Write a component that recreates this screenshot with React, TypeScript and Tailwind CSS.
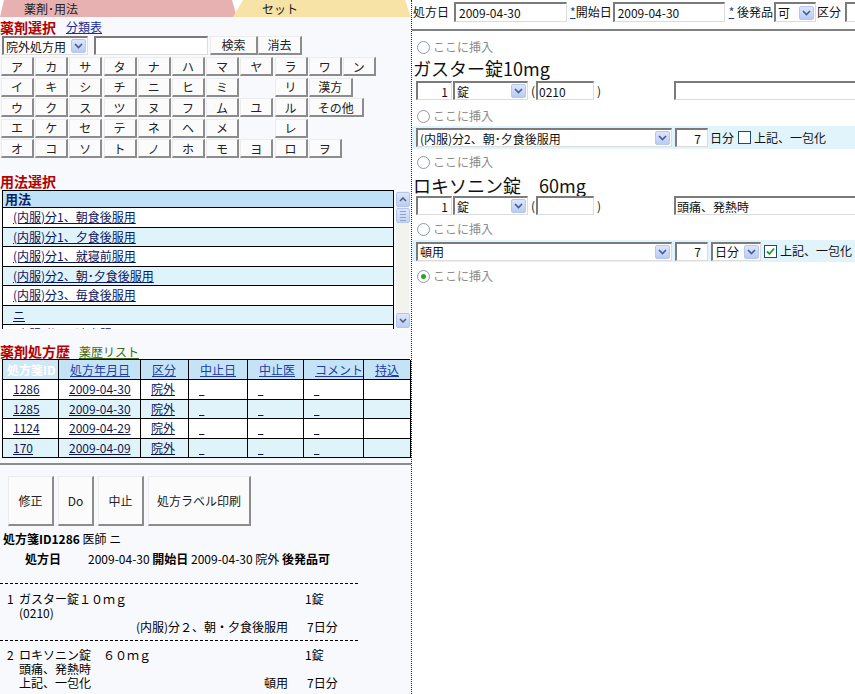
import React from "react";

const XP =
  "flex shrink-0 items-center justify-center bg-[#fbfbfb] border-t border-l border-t-[#ececec] border-l-[#ececec] border-r-2 border-b-2 border-r-[#8c8c8c] border-b-[#8c8c8c] text-[#222]";
const INSET =
  "border-t-2 border-l-2 border-t-[#7b7b7b] border-l-[#7b7b7b] border-r border-b border-r-[#dcdcdc] border-b-[#dcdcdc] bg-white";

function DropArrow() {
  return (
    <span className="flex h-[14px] w-[15px] shrink-0 items-center justify-center rounded-[2px] border border-[#b5c7ee] bg-linear-to-b from-[#dce6fd] to-[#b9cbf4]">
      <svg width="9" height="6" viewBox="0 0 9 6">
        <path d="M1 1 L4.5 4.5 L8 1" fill="none" stroke="#4a5f8c" strokeWidth="1.7" />
      </svg>
    </span>
  );
}

function Sel({ className, children }: { className: string; children?: React.ReactNode }) {
  return (
    <div className={`flex h-[19px] shrink-0 items-center justify-between pl-[2px] pr-[1px] ${INSET} ${className}`}>
      <span className="truncate text-[12px] leading-[15px] text-[#111]">{children}</span>
      <DropArrow />
    </div>
  );
}

function Box({ className, children }: { className: string; children?: React.ReactNode }) {
  return (
    <div className={`flex h-[19px] shrink-0 items-center text-[12px] leading-[15px] text-[#111] ${INSET} ${className}`}>
      {children}
    </div>
  );
}

function Radio({ checked }: { checked?: boolean }) {
  return (
    <span className="flex h-[13px] w-[13px] shrink-0 items-center justify-center rounded-full border border-[#8e9aa8] bg-white">
      {checked && <span className="h-[5px] w-[5px] rounded-full bg-[#2aa52a]" />}
    </span>
  );
}

function Insert({ checked }: { checked?: boolean }) {
  return (
    <div className="flex h-[18px] items-center pl-[5px]">
      <Radio checked={checked} />
      <span className="ml-[3px] text-[12px] leading-[14px] text-[#8a8a8a]">ここに挿入</span>
    </div>
  );
}

function Check({ checked }: { checked?: boolean }) {
  return (
    <span className="flex h-[13px] w-[13px] shrink-0 items-center justify-center border border-[#1c4a7a] bg-white">
      {checked && (
        <svg width="9" height="9" viewBox="0 0 9 9">
          <path d="M1 4.5 L3.5 7 L8 1.5" fill="none" stroke="#21a121" strokeWidth="1.8" />
        </svg>
      )}
    </span>
  );
}

function ScrollBtn({ up }: { up?: boolean }) {
  return (
    <div className="mx-auto flex h-[15px] w-[14px] items-center justify-center rounded-[2px] border border-[#b4c6ee] bg-linear-to-b from-[#dde7fd] to-[#bccdf5]">
      <svg width="8" height="5" viewBox="0 0 8 5">
        <path d={up ? "M1 4 L4 1 L7 4" : "M1 1 L4 4 L7 1"} fill="none" stroke="#4d6185" strokeWidth="1.6" />
      </svg>
    </div>
  );
}

const KANA: string[][] = [
  ["ア", "カ", "サ", "タ", "ナ", "ハ", "マ", "ヤ", "ラ", "ワ", "ン"],
  ["イ", "キ", "シ", "チ", "ニ", "ヒ", "ミ", "", "リ", "漢方"],
  ["ウ", "ク", "ス", "ツ", "ヌ", "フ", "ム", "ユ", "ル", "その他"],
  ["エ", "ケ", "セ", "テ", "ネ", "ヘ", "メ", "", "レ"],
  ["オ", "コ", "ソ", "ト", "ノ", "ホ", "モ", "ヨ", "ロ", "ヲ"],
];

const USAGE = [
  "(内服)分1、朝食後服用",
  "(内服)分1、夕食後服用",
  "(内服)分1、就寝前服用",
  "(内服)分2、朝･夕食後服用",
  "(内服)分3、毎食後服用",
  "ニ",
  "(内服)分1、適宜服用",
];

const HIST = [
  ["1286", "2009-04-30"],
  ["1285", "2009-04-30"],
  ["1124", "2009-04-29"],
  ["170", "2009-04-09"],
];

const HEAD = ["処方年月日", "区分", "中止日", "中止医", "コメント", "持込"];

function LeftPane() {
  return (
    <div className="flex h-full w-[411px] shrink-0 flex-col bg-[#f7f9fc] text-[12px] text-[#111]">
      {/* tabs */}
      <div className="flex h-[17px] shrink-0 bg-white">
        <div className="h-full w-[237px] shrink-0 bg-[#e7b0b1] pl-[24px] text-[12px] leading-[17px] text-[#222] [clip-path:polygon(0_100%,4px_0,232px_0,100%_100%)]">
          薬剤･用法
        </div>
        <div className="-ml-[4px] h-full flex-1 bg-[#f8e3a6] pl-[29px] text-[12px] leading-[17px] text-[#222] [clip-path:polygon(0_100%,10px_0,calc(100%_-_6px)_0,100%_100%)]">
          セット
        </div>
      </div>

      {/* heading */}
      <div className="flex h-[19px] shrink-0 items-end pb-[1px]">
        <span className="text-[14px] font-bold leading-[16px] text-[#b40000]">薬剤選択</span>
        <span className="ml-[10px] text-[12px] leading-[16px] text-[#1a2f9a] underline">分類表</span>
      </div>

      {/* search row */}
      <div className="flex h-[19px] shrink-0 items-center pl-[2px]">
        <Sel className="w-[86px]">院外処方用</Sel>
        <Box className="ml-[6px] w-[114px]" />
        <div className={`${XP} ml-[2px] h-[19px] w-[48px] text-[12px]`}>検索</div>
        <div className={`${XP} h-[19px] w-[44px] text-[12px]`}>消去</div>
      </div>

      {/* kana grid */}
      <div className="mt-[2px] flex shrink-0 flex-col gap-[1.5px] pl-[1px]">
        {KANA.map((row, i) => (
          <div key={i} className="flex gap-[1.2px]">
            {row.map((k, j) =>
              k === "" ? (
                <div key={j} className="h-[19px] w-[33px] shrink-0" />
              ) : (
                <div
                  key={j}
                  className={`${XP} h-[19px] text-[12px] leading-[15px] ${
                    k === "漢方" ? "w-[44px]" : k === "その他" ? "w-[55px]" : "w-[33px]"
                  }`}
                >
                  {k}
                </div>
              )
            )}
          </div>
        ))}
      </div>

      {/* usage */}
      <div className="mt-[15px] h-[16px] shrink-0 text-[14px] font-bold leading-[16px] text-[#b40000]">用法選択</div>
      <div className="mt-[1px] flex h-[139px] shrink-0 pl-[2px]">
        <div className="h-full w-[392px] overflow-hidden border-l border-r border-t border-black">
          <div className="h-[17px] border-b border-black bg-[#bfe2f7] pl-[2px] text-[13px] font-bold leading-[16px] text-[#0d1f6a]">
            用法
          </div>
          {USAGE.map((u, i) => (
            <div
              key={i}
              className={`h-[19.5px] border-b border-black pl-[10px] text-[12px] leading-[18px] text-[#0b1660] ${
                i % 2 === 1 ? "bg-[#dff3fb]" : "bg-white"
              }`}
            >
              <span className="underline">{u}</span>
            </div>
          ))}
        </div>
        <div className="ml-[1px] flex h-full w-[15px] flex-col border border-[#fbfbf8] bg-[#f3f3ee] pt-[1px]">
          <ScrollBtn up />
          <div className="mx-auto mt-[1px] flex h-[15px] w-[14px] flex-col items-center justify-center gap-[2px] rounded-[2px] border border-[#b4c6ee] bg-linear-to-b from-[#dde7fd] to-[#c4d3f6]">
            <span className="h-px w-[6px] bg-[#8ea2cc]" />
            <span className="h-px w-[6px] bg-[#8ea2cc]" />
            <span className="h-px w-[6px] bg-[#8ea2cc]" />
            <span className="h-px w-[6px] bg-[#8ea2cc]" />
          </div>
          <div className="flex-1" />
          <ScrollBtn />
        </div>
      </div>

      {/* history */}
      <div className="mt-[14px] flex h-[16px] shrink-0 items-end">
        <span className="text-[14px] font-bold leading-[16px] text-[#b40000]">薬剤処方歴</span>
        <span className="ml-[9px] text-[12px] leading-[15px] text-[#426a14] underline">薬歴リスト</span>
      </div>
      <div className="ml-[2px] grid w-[408px] shrink-0 grid-cols-[56px_82px_48px_59px_56px_60px_47px] border-l border-t border-black text-[12px]">
        <div className="flex h-[20px] items-center border-b border-r border-black bg-[#cfe8f8] pl-[4px] font-bold text-white">
          処方箋ID
        </div>
        {HEAD.map((h) => (
          <div
            key={h}
            className="flex h-[20px] items-center border-b border-r border-black bg-[#c5e3f7] pl-[11px] text-[#1d3da8]"
          >
            <span className="underline">{h}</span>
          </div>
        ))}
        {HIST.map((r, i) => {
          const bg = i % 2 === 1 ? "bg-[#dff3fb]" : "bg-white";
          const cell = `flex h-[19.5px] items-center border-b border-r border-black pl-[10px] text-[#101850] ${bg}`;
          return (
            <React.Fragment key={r[0]}>
              <div className={cell}>
                <span className="underline">{r[0]}</span>
              </div>
              <div className={cell}>
                <span className="underline">{r[1]}</span>
              </div>
              <div className={cell}>
                <span className="underline">院外</span>
              </div>
              <div className={cell}>
                <span className="underline">&nbsp;&nbsp;</span>
              </div>
              <div className={cell}>
                <span className="underline">&nbsp;&nbsp;</span>
              </div>
              <div className={cell}>
                <span className="underline">&nbsp;&nbsp;</span>
              </div>
              <div className={cell} />
            </React.Fragment>
          );
        })}
      </div>
      <div className="mt-[5px] h-[2px] shrink-0 bg-[#8d8d8d]" />

      {/* buttons */}
      <div className="mt-[11px] flex h-[50px] shrink-0 gap-[4px] pl-[8px]">
        <div className={`${XP} h-[50px] w-[46px] text-[12px]`}>修正</div>
        <div className={`${XP} h-[50px] w-[36px] text-[12px]`}>Do</div>
        <div className={`${XP} h-[50px] w-[46px] text-[12px]`}>中止</div>
        <div className={`${XP} h-[50px] w-[103px] text-[12px]`}>処方ラベル印刷</div>
      </div>

      {/* summary */}
      <div className="mt-[6px] h-[14px] shrink-0 whitespace-pre pl-[3px] text-[12px] leading-[14px] text-black">
        <b>処方箋ID1286</b> 医師 ニ
      </div>
      <div className="mt-[6px] h-[14px] shrink-0 whitespace-pre pl-[25px] text-[12px] leading-[14px] text-black">
        <b>処方日</b>
        <span className="ml-[27px]">2009-04-30 </span>
        <b>開始日</b> 2009-04-30 院外 <b>後発品可</b>
      </div>
      <div className="mt-[17px] w-[358px] shrink-0 border-t border-dashed border-black" />
      <div className="mt-[8px] w-[358px] shrink-0 text-[12px] leading-[14px] text-black">
        <div className="flex h-[14px]">
          <span className="w-[19px] shrink-0 pl-[7px]">1</span>
          <span className="flex-1">ガスター錠１０ｍｇ</span>
          <span className="w-[53px] shrink-0">1錠</span>
        </div>
        <div className="h-[14px] pl-[19px]">(0210)</div>
        <div className="flex h-[14px]">
          <span className="flex-1 pr-[17px] text-right">(内服)分２、朝・夕食後服用</span>
          <span className="w-[53px] shrink-0 pl-[2px]">7日分</span>
        </div>
      </div>
      <div className="mt-[6px] w-[358px] shrink-0 border-t border-dashed border-black" />
      <div className="mt-[7px] w-[358px] shrink-0 text-[12px] leading-[14px] text-black">
        <div className="flex h-[14px]">
          <span className="w-[19px] shrink-0 pl-[7px]">2</span>
          <span className="flex-1 whitespace-pre">ロキソニン錠　６０ｍｇ</span>
          <span className="w-[53px] shrink-0">1錠</span>
        </div>
        <div className="h-[14px] pl-[19px]">頭痛、発熱時</div>
        <div className="flex h-[14px]">
          <span className="w-[19px] shrink-0" />
          <span className="flex-1">上記、一包化</span>
          <span className="pr-[17px]">頓用</span>
          <span className="w-[53px] shrink-0 pl-[2px]">7日分</span>
        </div>
      </div>
    </div>
  );
}

function RightPane() {
  return (
    <div className="flex h-full min-w-0 flex-1 flex-col overflow-hidden border-l border-dotted border-[#222] bg-white text-[12px] text-[#111]">
      {/* header */}
      <div className="flex h-[31px] shrink-0 items-start border-b-2 border-[#808080] pt-[2px]">
        <div className="flex h-[20px] shrink-0 items-center whitespace-nowrap">
          <span className="ml-[1px]">処方日</span>
          <Box className="ml-[5px] h-[20px] w-[113px] pl-[3px]">2009-04-30</Box>
          <span className="ml-[3px]">
            <span className="text-[#1e3ea0] underline">*</span>開始日
          </span>
          <Box className="ml-[1px] h-[20px] w-[112px] pl-[3px]">2009-04-30</Box>
          <span className="ml-[4px] whitespace-pre">
            <span className="text-[#1e3ea0] underline">*</span> 後発品
          </span>
          <Sel className="ml-[1px] h-[20px] w-[42px]">可</Sel>
          <span className="ml-[1px]">区分</span>
          <Box className="ml-[4px] h-[20px] w-[60px]" />
        </div>
      </div>

      <div className="mt-[7px] shrink-0">
        <Insert />
      </div>
      <div className="mt-[1px] h-[23px] shrink-0 pl-[1px] text-[18px] leading-[23px] text-[#111]">ガスター錠10mg</div>
      <div className="mt-[1px] flex h-[19px] shrink-0 items-center whitespace-nowrap pl-[4px]">
        <Box className="w-[36px] justify-end pr-[3px]">1</Box>
        <Sel className="ml-[1px] w-[75px]">錠</Sel>
        <span className="ml-[3px] w-[4px]">(</span>
        <Box className="ml-[1px] w-[58px] pl-[1px]">0210</Box>
        <span className="ml-[3px] w-[4px]">)</span>
        <Box className="ml-[73px] w-[200px]" />
      </div>
      <div className="mt-[7px] shrink-0">
        <Insert />
      </div>
      <div className="mt-[1px] flex h-[23px] shrink-0 items-center whitespace-nowrap bg-[#e1f4fb] pl-[4px]">
        <Sel className="w-[256px]">(内服)分2、朝･夕食後服用</Sel>
        <Box className="ml-[3px] w-[33px] justify-end pr-[6px]">7</Box>
        <span className="ml-[2px]">日分</span>
        <span className="ml-[4px]">
          <Check />
        </span>
        <span className="ml-[3px]">上記、一包化</span>
      </div>
      <div className="mt-[4px] shrink-0">
        <Insert />
      </div>
      <div className="mt-[3px] h-[22px] shrink-0 whitespace-pre pl-[1px] text-[18px] leading-[22px] text-[#111]">
        ロキソニン錠　60mg
      </div>
      <div className="flex h-[19px] shrink-0 items-center whitespace-nowrap pl-[4px]">
        <Box className="w-[36px] justify-end pr-[3px]">1</Box>
        <Sel className="ml-[1px] w-[75px]">錠</Sel>
        <span className="ml-[3px] w-[4px]">(</span>
        <Box className="ml-[1px] w-[58px]" />
        <span className="ml-[3px] w-[4px]">)</span>
        <Box className="ml-[73px] w-[200px] pl-[1px]">頭痛、発熱時</Box>
      </div>
      <div className="mt-[5px] shrink-0">
        <Insert />
      </div>
      <div className="mt-[2px] flex h-[22px] shrink-0 items-center whitespace-nowrap bg-[#e1f4fb] pl-[4px]">
        <Sel className="w-[256px]">頓用</Sel>
        <Box className="ml-[3px] w-[33px] justify-end pr-[6px]">7</Box>
        <Sel className="ml-[3px] w-[50px]">日分</Sel>
        <span className="ml-[3px]">
          <Check checked />
        </span>
        <span className="ml-[3px]">上記、一包化</span>
      </div>
      <div className="mt-[5px] shrink-0">
        <Insert checked />
      </div>
    </div>
  );
}

export default function App() {
  return (
    <div className="flex h-[694px] w-[855px] overflow-hidden bg-white font-['Noto_Sans_CJK_JP','Noto_Sans',sans-serif]">
      <LeftPane />
      <RightPane />
    </div>
  );
}
